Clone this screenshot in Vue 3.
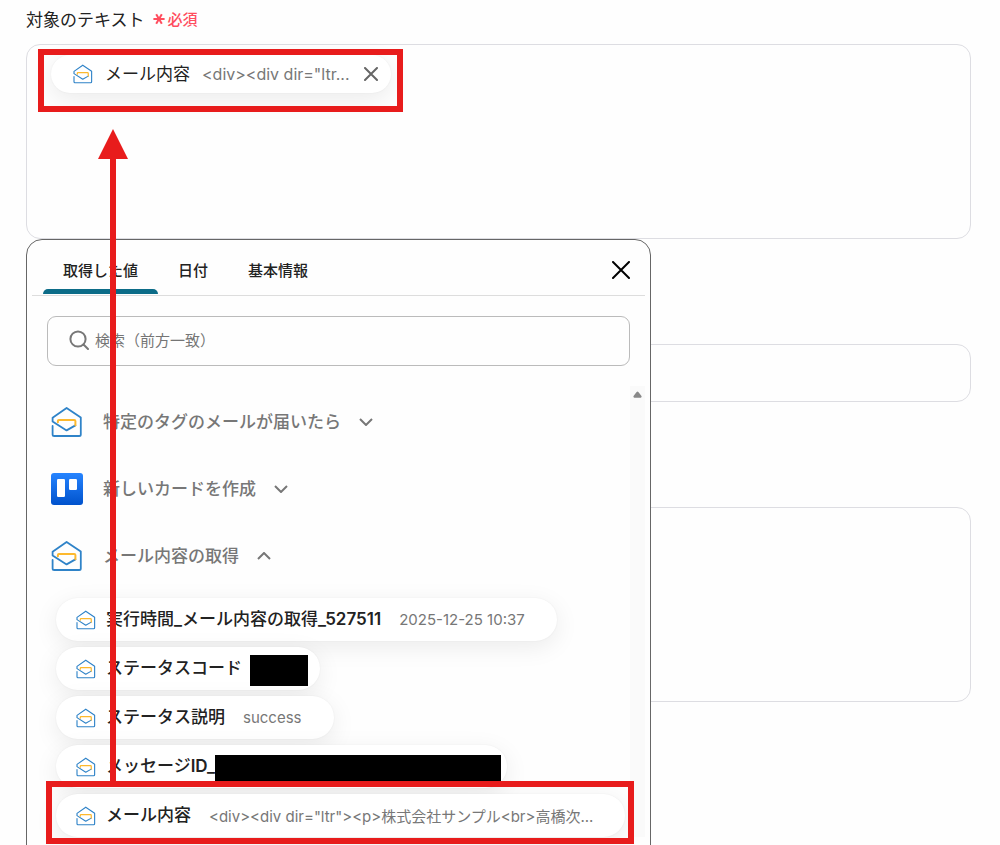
<script setup>
import { h, ref } from 'vue'

const tabs = ['取得した値', '日付', '基本情報']
const currentTab = ref(0)
const search = ref('')
const single = ref('')
const body = ref('')

const groups = ref([
    { name: '特定のタグのメールが届いたら', icon: 'mail', open: false, items: [] },
    { name: '新しいカードを作成', icon: 'board', open: false, items: [] },
    {
        name: 'メール内容の取得',
        icon: 'mail',
        open: true,
        items: [
            { label: '実行時間_メール内容の取得_527511', value: '2025-12-25 10:37' },
            { label: 'ステータスコード', mask: 'short' },
            { label: 'ステータス説明', value: 'success' },
            { label: 'メッセージID_', mask: 'long' },
            { label: 'メール内容', value: '<div><div dir="ltr"><p>株式会社サンプル<br>高橋次...' },
        ],
    },
])

function toggle(group) {
    group.open = !group.open
}

// open envelope, used at two sizes
function MailIcon() {
    return h('svg', { viewBox: '0 0 32 32', fill: 'none', 'stroke-linecap': 'round', 'stroke-linejoin': 'round', 'aria-hidden': 'true' }, [
        h('path', { d: 'M1.6 20V28.4Q1.6 30 3.2 30H28.2Q29.8 30 29.8 28.4V11.6L15.6 1.9L1.6 11.8V15.4L15.6 24.4L24.4 19.4', stroke: '#2f83c8', 'stroke-width': 1.8 }),
        h('path', { d: 'M6.9 16.2V14.9Q6.9 13.9 7.9 13.9H23.2Q24.4 13.9 24.4 15.1V19.2', stroke: '#fdb92e', 'stroke-width': 2 }),
    ])
}
</script>

<template>
    <main class="page">
        <section class="field">
            <div class="field__head">
                <span id="target-label" class="field__label">対象のテキスト</span>
                <span class="field__required">
                    <svg class="field__star" viewBox="0 0 12 12" aria-hidden="true">
                        <path d="M.4 6H11.6M3.2 1.2L8.8 10.8M8.8 1.2L3.2 10.8" />
                    </svg>
                    必須
                </span>
            </div>
            <div class="box box--tall editor" role="textbox" tabindex="0" aria-labelledby="target-label">
                <div class="chip chip--selected">
                    <MailIcon class="chip__icon" />
                    <span class="chip__label">メール内容</span>
                    <span class="chip__value">&lt;div&gt;&lt;div dir="ltr...</span>
                    <button class="chip__remove" type="button" aria-label="削除">
                        <svg viewBox="0 0 14 14" aria-hidden="true"><path d="M1 1L13 13M13 1L1 13" /></svg>
                    </button>
                </div>
            </div>

            <div class="picker">
                <div class="picker__head">
                    <div class="tabs" role="tablist">
                        <button
                            v-for="(tab, i) in tabs"
                            :key="tab"
                            class="tab"
                            :class="{ 'tab--active': i === currentTab }"
                            type="button"
                            role="tab"
                            :aria-selected="i === currentTab"
                            @click="currentTab = i"
                        >{{ tab }}</button>
                    </div>
                    <button class="picker__close" type="button" aria-label="閉じる">
                        <svg viewBox="0 0 18 18" aria-hidden="true"><path d="M1 1L17 17M17 1L1 17" /></svg>
                    </button>
                </div>

                <label class="search">
                    <svg class="search__icon" viewBox="0 0 20 20" aria-hidden="true">
                        <circle cx="9" cy="9" r="7.6" />
                        <path d="M14.5 14.5L19 19" />
                    </svg>
                    <input v-model="search" class="search__input" type="text" placeholder="検索（前方一致）" aria-label="検索（前方一致）">
                </label>

                <div class="picker__body">
                    <div class="groups">
                        <div v-for="group in groups" :key="group.name" class="group">
                            <button class="group__head" type="button" :aria-expanded="group.open" @click="toggle(group)">
                                <MailIcon v-if="group.icon === 'mail'" class="group__icon" />
                                <svg v-else class="group__icon" viewBox="0 0 32 32" aria-hidden="true">
                                    <defs>
                                        <linearGradient id="board" x1="0" y1="0" x2="0" y2="1">
                                            <stop offset="0" stop-color="#2684ff" />
                                            <stop offset="1" stop-color="#0052cc" />
                                        </linearGradient>
                                    </defs>
                                    <rect width="32" height="32" rx="3" fill="url(#board)" />
                                    <rect x="6" y="6" width="8" height="18" rx="1.2" fill="#fff" />
                                    <rect x="18" y="6" width="8" height="11" rx="1.2" fill="#fff" />
                                </svg>
                                <span class="group__name">{{ group.name }}</span>
                                <svg class="group__arrow" :class="{ 'group__arrow--open': group.open }" viewBox="0 0 14 8" aria-hidden="true">
                                    <path d="M1 1L7 7L13 1" />
                                </svg>
                            </button>
                            <div v-if="group.open" class="group__items">
                                <button
                                    v-for="item in group.items"
                                    :key="item.label"
                                    class="chip"
                                    :class="item.mask && 'chip--' + item.mask"
                                    type="button"
                                >
                                    <MailIcon class="chip__icon" />
                                    <span class="chip__label">{{ item.label }}</span>
                                    <span v-if="item.mask" class="chip__mask"></span>
                                    <span v-else class="chip__value">{{ item.value }}</span>
                                </button>
                            </div>
                        </div>
                    </div>
                    <div class="scrollbar">
                        <svg class="scrollbar__up" viewBox="0 0 10 7" aria-hidden="true">
                            <path d="M4 .8Q5 -.4 6 .8L9.4 5.2Q10 7 8.6 7H1.4Q0 7 .6 5.2Z" />
                        </svg>
                    </div>
                </div>
            </div>
        </section>

        <input v-model="single" class="box" type="text" aria-label="値">
        <textarea v-model="body" class="box box--tall" aria-label="本文"></textarea>

        <!-- red marks over the form -->
        <div class="mark mark--target"></div>
        <div class="mark mark--source"></div>
        <svg class="arrow" viewBox="0 0 30 652" aria-hidden="true">
            <path d="M15 0L30 30H18V652H12V30H0Z" />
        </svg>
    </main>
</template>

<style>
body {
    margin: 0;
    background: #fefefe;
}
</style>

<style scoped>
.page {
    position: relative;
    box-sizing: border-box;
    height: 100vh;
    padding: 0 29px 0 26px;
    overflow: hidden;
    display: flex;
    flex-direction: column;
    gap: 105px;
    font-family: Inter, "Noto Sans CJK JP", sans-serif;
    color: #222;
}

button,
input,
textarea {
    font: inherit;
    color: inherit;
}

button {
    padding: 0;
    border: 0;
    background: none;
    cursor: pointer;
}

svg {
    flex: none;
}

.field {
    position: relative;
}

.field__head {
    display: flex;
    align-items: center;
    gap: 8px;
    height: 36px;
    padding-bottom: 8px;
}

.field__label {
    font-size: 17px;
}

.field__required,
.tab,
.group__head,
.chip__label {
    font-family: Inter, "Noto Sans CJK JP Medium", "Noto Sans CJK JP", sans-serif;
}

.field__required {
    display: flex;
    align-items: center;
    gap: 3px;
    font-size: 15px;
    font-weight: 500;
    color: #ff4d5e;
}

.field__star {
    width: 12px;
    height: 12px;
    margin-top: 2px;
    fill: none;
    stroke: currentColor;
    stroke-width: 2;
}

.box {
    flex: none;
    box-sizing: border-box;
    display: block;
    width: 100%;
    height: 58px;
    padding: 10px 24px;
    border: 1px solid #dddde2;
    border-radius: 14px;
    background: transparent;
    outline: none;
    resize: none;
}

.box--tall {
    height: 195px;
}

/* chips */
.chip {
    box-sizing: border-box;
    display: flex;
    align-items: center;
    height: 43px;
    padding: 0 32px 0 20px;
    border-radius: 22px;
    background: #fff;
    box-shadow: 0 6px 24px rgba(0, 0, 0, .08), 0 0 2px rgba(0, 0, 0, .06);
    white-space: nowrap;
}

.chip__icon {
    width: 20px;
    height: 20px;
    margin-right: 10px;
}

.chip__label {
    padding-bottom: 4px;
    font-size: 17px;
    font-weight: 600;
}

.chip__value {
    margin-left: 18px;
    font-size: 15px;
    color: #777;
}

.chip--short {
    padding-right: 12px;
}

.chip--long {
    padding-right: 6px;
}

.chip__mask {
    width: 58px;
    height: 31px;
    margin: 3px 0 0 8px;
    background: #000;
}

.chip--long .chip__mask {
    width: 286px;
    height: 26px;
    margin-left: 0;
}

.editor .chip--selected {
    height: 38px;
    padding: 0 13px 0 22px;
}

.chip--selected .chip__label {
    font-family: inherit;
    font-weight: 400;
}

.chip--selected .chip__icon {
    margin-right: 12px;
}

.chip--selected .chip__value {
    margin-left: 12px;
    font-size: 16px;
}

.editor {
    display: flex;
    align-items: flex-start;
}

.chip__remove {
    display: flex;
    margin-left: 14px;
}

.chip__remove svg {
    width: 14px;
    height: 14px;
    fill: none;
    stroke: #666;
    stroke-width: 2;
    stroke-linecap: round;
}

/* picker */
.picker {
    position: absolute;
    z-index: 1;
    top: 100%;
    left: 0;
    box-sizing: border-box;
    width: 625px;
    max-width: 100%;
    padding: 0 5px 40px;
    border: 1px solid #666;
    border-radius: 16px;
    background: #fefefe;
}

.picker__head {
    display: flex;
    align-items: center;
    justify-content: space-between;
    height: 55px;
    padding: 0 15px 0 11px;
    border-bottom: 1px solid #ddd;
}

.tabs {
    display: flex;
    align-self: stretch;
}

.tab {
    position: relative;
    padding: 4px 20px 0;
    font-size: 15px;
    font-weight: 600;
}

.tab--active::after {
    content: '';
    position: absolute;
    right: 0;
    bottom: 1px;
    left: 0;
    height: 5px;
    border-radius: 5px 5px 0 0;
    background: #0c6c88;
}

.picker__close {
    display: flex;
    padding-top: 4px;
}

.picker__close svg {
    width: 18px;
    height: 18px;
    fill: none;
    stroke: #000;
    stroke-width: 2;
    stroke-linecap: round;
}

.search {
    box-sizing: border-box;
    display: flex;
    align-items: center;
    gap: 6px;
    height: 50px;
    margin: 20px 15px;
    padding: 0 21px 2px;
    border: 1px solid #bbb;
    border-radius: 9px;
}

.search__icon {
    width: 20px;
    height: 20px;
    fill: none;
    stroke: #777;
    stroke-width: 2;
    stroke-linecap: round;
}

.search__input {
    flex: 1;
    min-width: 0;
    padding: 0;
    border: 0;
    outline: none;
    background: none;
    font-size: 15px;
}

.search__input::placeholder {
    color: #757575;
    opacity: 1;
}

.picker__body {
    display: flex;
}

.groups {
    flex: 1;
    min-width: 0;
    padding: 2px 0 0 19px;
}

.group__head {
    display: flex;
    align-items: center;
    height: 67px;
    font-size: 17px;
    font-weight: 600;
    color: #777;
}

.group__icon {
    width: 32px;
    height: 32px;
    margin-right: 20px;
}

.group__name {
    padding-bottom: 2px;
}

.group__arrow {
    width: 14px;
    height: 8px;
    margin-left: 18px;
    fill: none;
    stroke: currentColor;
    stroke-width: 2;
}

.group__arrow--open {
    transform: rotate(180deg);
}

.group__items {
    display: flex;
    flex-direction: column;
    align-items: flex-start;
    gap: 6px;
    padding: 9px 0 0 5px;
}

.scrollbar {
    display: flex;
    justify-content: center;
    width: 15px;
    padding-top: 5px;
    background: #fafafa;
}

.scrollbar__up {
    width: 9px;
    height: 7px;
    fill: #888;
}

/* red marks */
.mark {
    position: absolute;
    z-index: 2;
    box-sizing: border-box;
    border: 6px solid #e81c1c;
    pointer-events: none;
}

.mark--target {
    top: 49px;
    left: 38px;
    width: 365px;
    height: 63px;
}

.mark--source {
    top: 781px;
    left: 46px;
    width: 588px;
    height: 63px;
}

.arrow {
    position: absolute;
    z-index: 2;
    top: 129px;
    left: 98px;
    width: 30px;
    height: 652px;
    fill: #e81c1c;
    pointer-events: none;
}
</style>
